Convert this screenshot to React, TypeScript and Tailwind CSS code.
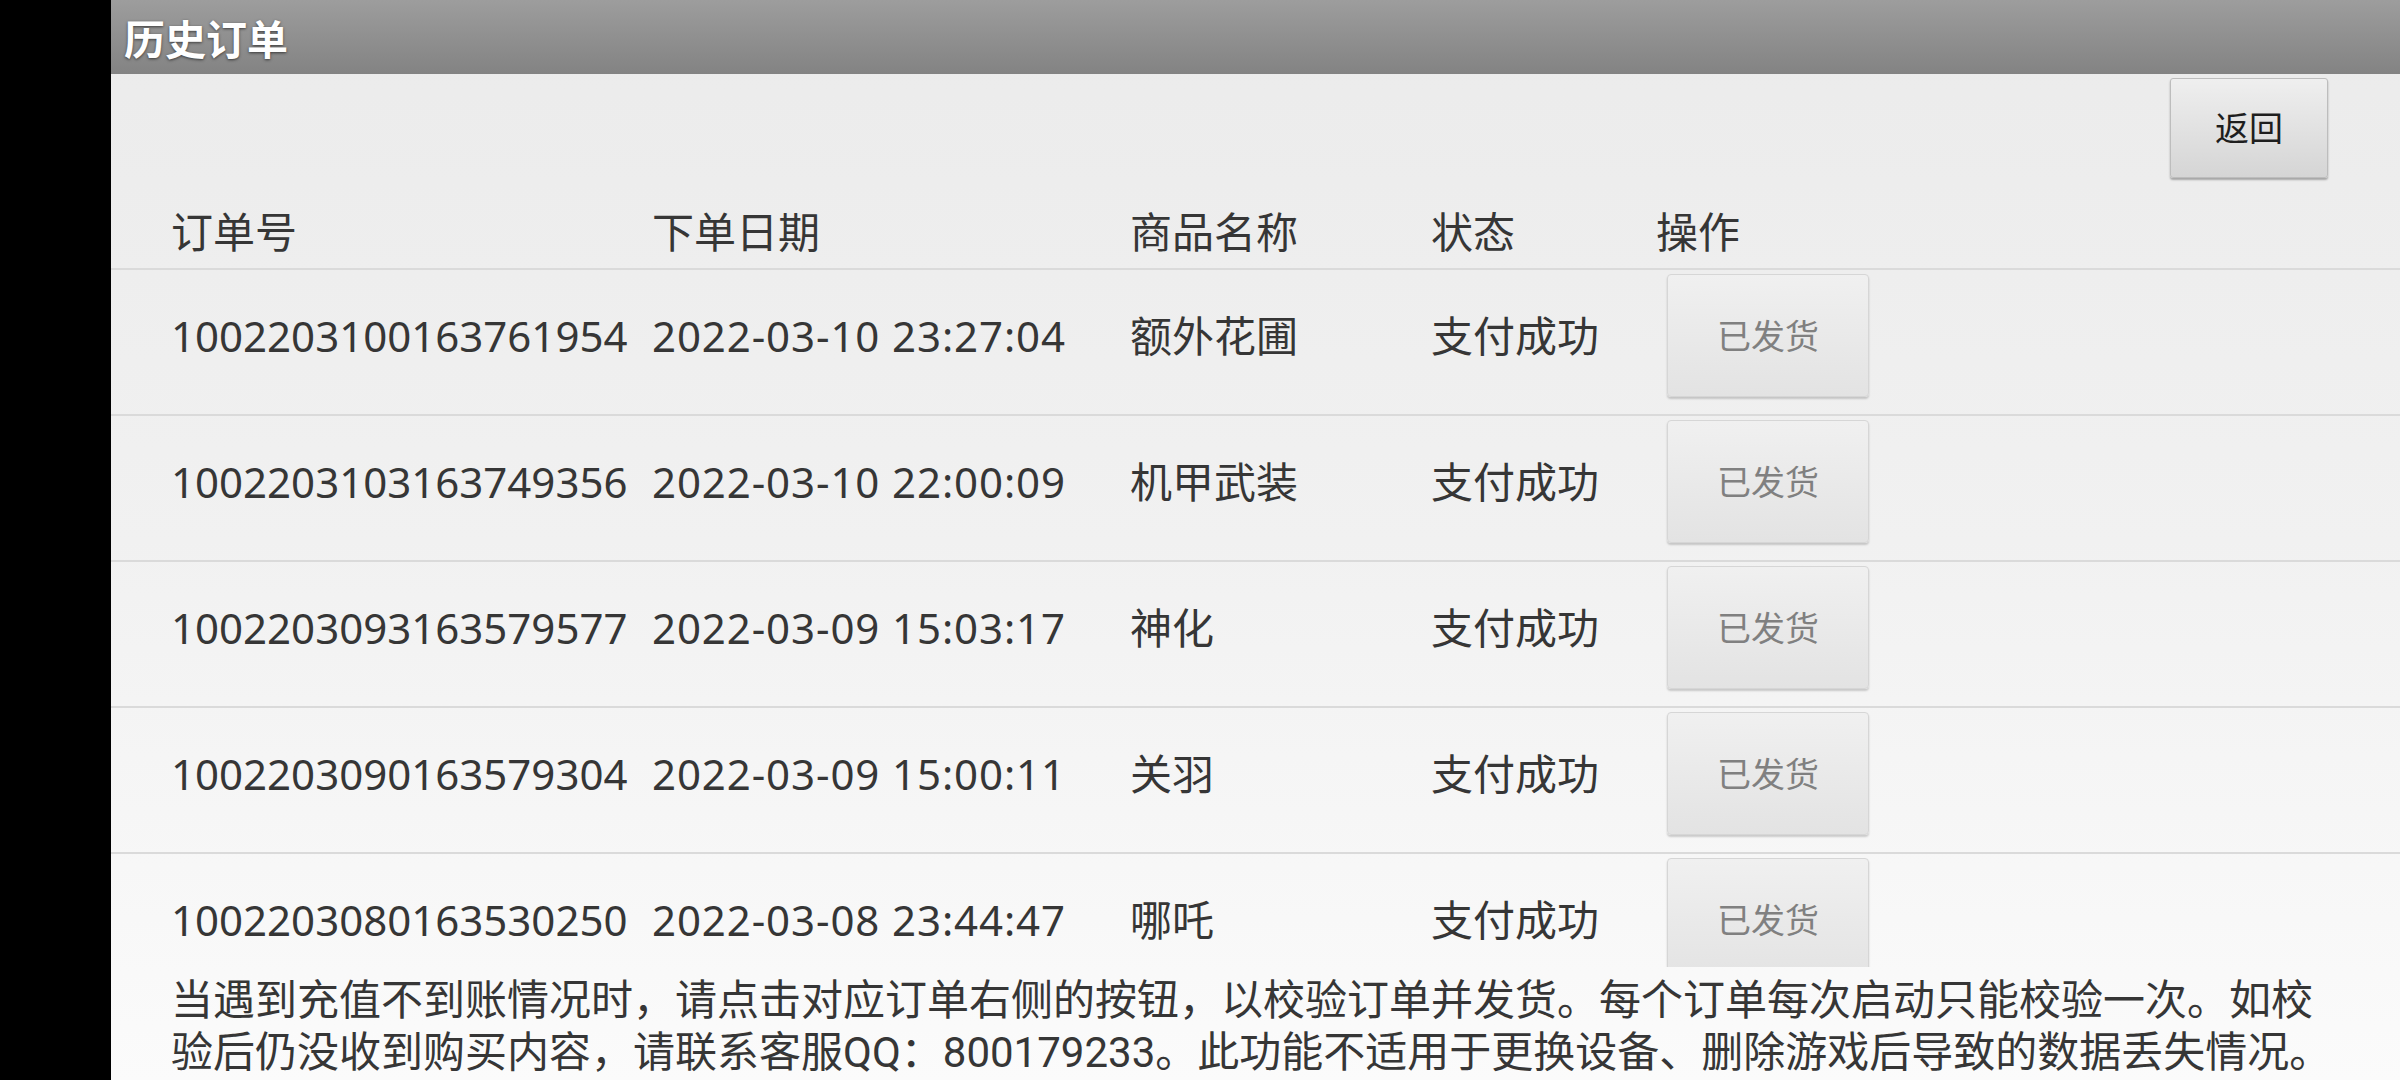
const orders = [
  { id: "1002203100163761954", date: "2022-03-10 23:27:04", name: "额外花圃", status: "支付成功" },
  { id: "1002203103163749356", date: "2022-03-10 22:00:09", name: "机甲武装", status: "支付成功" },
  { id: "1002203093163579577", date: "2022-03-09 15:03:17", name: "神化", status: "支付成功" },
  { id: "1002203090163579304", date: "2022-03-09 15:00:11", name: "关羽", status: "支付成功" },
  { id: "1002203080163530250", date: "2022-03-08 23:44:47", name: "哪吒", status: "支付成功" },
];

const font = "font-['Noto_Sans','Noto_Sans_CJK_SC',sans-serif]";

export default function App() {
  return (
    <div className={`flex h-[1080px] w-[2400px] overflow-hidden bg-black ${font}`}>
      <div className="w-[111px] shrink-0 bg-black" />
      <div className="flex flex-1 flex-col bg-gradient-to-b from-[#ebebeb] via-[#f1f1f1] to-[#fbfbfb]">
        {/* Title bar */}
        <div className="flex h-[74px] shrink-0 items-center bg-gradient-to-b from-[#9d9d9d] to-[#838383] pl-[13px]">
          <h1 className="font-['Noto_Sans_CJK_SC',sans-serif] text-[41px] leading-none font-bold text-white [text-shadow:0_1px_3px_rgba(0,0,0,0.6)]">
            历史订单
          </h1>
        </div>

        {/* Back button */}
        <div className="flex h-[104px] shrink-0 justify-end pt-[4px] pr-[72px]">
          <button className="h-[100px] w-[158px] rounded-[3px] border border-[#bdbdbd] bg-gradient-to-b from-[#efefef] to-[#d5d5d5] text-[34px] text-[#1e1e1e] shadow-[0_2px_2px_rgba(0,0,0,0.3)]">
            返回
          </button>
        </div>

        {/* Column headers */}
        <div className="grid h-[90px] shrink-0 grid-cols-[481px_478px_301px_225px_1fr] items-center pt-[18px] pl-[60px] text-[42px] leading-none text-[#363636]">
          <span>订单号</span>
          <span>下单日期</span>
          <span>商品名称</span>
          <span>状态</span>
          <span>操作</span>
        </div>

        {/* Order list */}
        <div className="h-[699px] shrink-0 overflow-hidden">
          {orders.map((o) => (
            <div
              key={o.id}
              className="grid h-[146px] grid-cols-[481px_478px_301px_236px_1fr] items-start border-t-2 border-[#dadada] pt-[4px] pl-[60px] text-[42px] leading-none text-[#363636]"
            >
              <span className="flex h-[123px] items-center">{o.id}</span>
              <span className="flex h-[123px] items-center tracking-[0.9px]">{o.date}</span>
              <span className="flex h-[123px] items-center">{o.name}</span>
              <span className="flex h-[123px] items-center">{o.status}</span>
              <div>
                <button className="h-[123px] w-[202px] rounded-[4px] border border-[#d6d6d6] bg-gradient-to-b from-[#f0f0f0] to-[#e3e3e3] text-[34px] text-[#808080] shadow-[0_2px_2px_rgba(0,0,0,0.18)]">
                  已发货
                </button>
              </div>
            </div>
          ))}
        </div>

        {/* Notice */}
        <div className="pt-[8px] pl-[60px] font-['Roboto','Noto_Sans_CJK_SC',sans-serif] text-[42px] leading-[52px] whitespace-nowrap text-[#363636]">
          <p>当遇到充值不到账情况时，请点击对应订单右侧的按钮，以校验订单并发货。每个订单每次启动只能校验一次。如校</p>
          <p>验后仍没收到购买内容，请联系客服QQ：800179233。此功能不适用于更换设备、删除游戏后导致的数据丢失情况。</p>
        </div>
      </div>
    </div>
  );
}
